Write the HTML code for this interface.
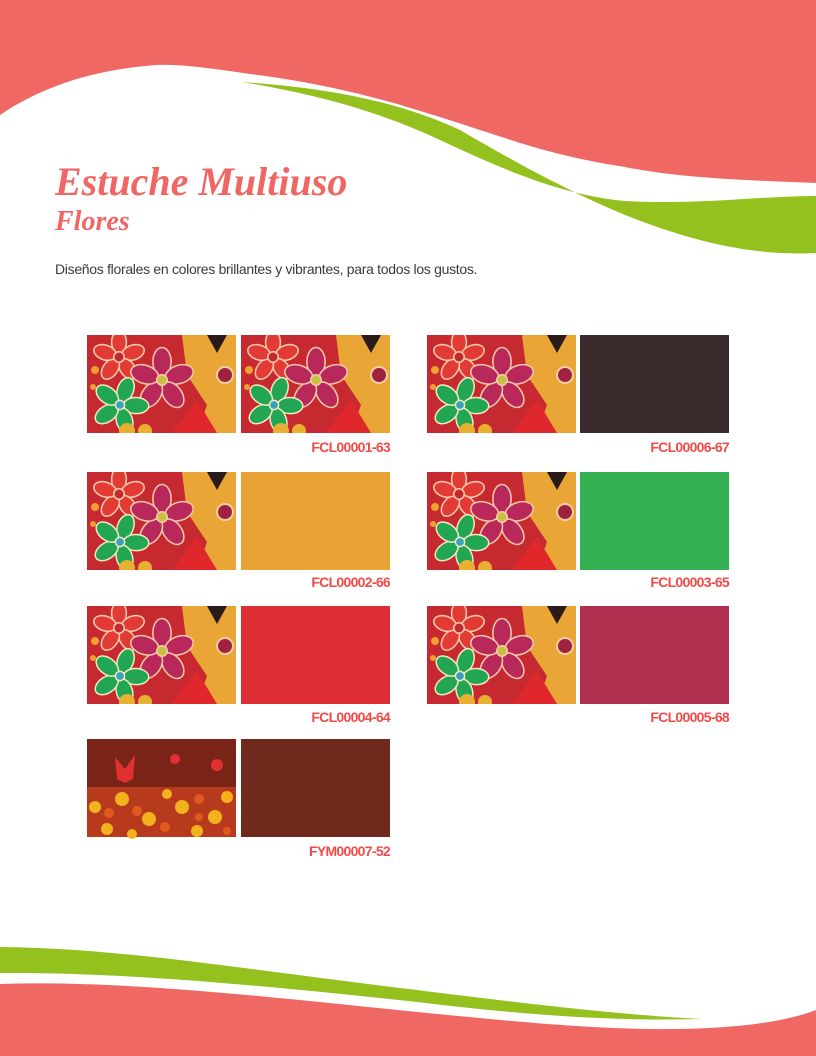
<!DOCTYPE html>
<html><head><meta charset="utf-8"><style>
body{margin:0;width:816px;height:1056px;position:relative;background:#fff;overflow:hidden;font-family:"Liberation Sans",sans-serif}
svg.bg{position:absolute;left:0;top:0}
.t{position:absolute;font-family:"Liberation Serif",serif;font-style:italic;font-weight:bold;color:#ef6663;white-space:nowrap}
.d{position:absolute;left:55px;top:261px;font-size:14px;color:#3a3a3a;letter-spacing:-0.3px}
.lab{position:absolute;font-size:14px;font-weight:bold;color:#ef4b48;letter-spacing:-0.7px;text-align:right;width:200px}
</style></head><body>
<svg class="bg" width="816" height="1056" viewBox="0 0 816 1056">
<path d="M0 0H816V183C740 180 680 178 625 167C580 160 550 152 520 143C480 130 450 120 417 110C360 92 300 80 250 74C210 68 180 64 156 65C90 70 40 88 0 115Z" fill="#ef6863"/>
<path d="M242 82C320 95 380 112 440 140C500 168 560 195 625 201C700 205 760 196 816 196V253C760 256 700 245 625 215C570 192 520 165 460 130C400 102 330 88 242 82Z" fill="#95c11f"/>
<path d="M0 947C120 948 250 970 417 990C560 1008 640 1016 703 1019C600 1022 500 1012 417 1002C260 985 120 972 0 973Z" fill="#95c11f"/>
<path d="M0 984C120 980 260 996 417 1012C520 1022 580 1028 650 1029C720 1030 780 1024 816 1010V1056H0Z" fill="#ef6863"/>
<defs>
<g id="pet"><ellipse cx="0" cy="-14" rx="7" ry="11"/><ellipse cx="0" cy="-14" rx="7" ry="11" transform="rotate(72)"/><ellipse cx="0" cy="-14" rx="7" ry="11" transform="rotate(144)"/><ellipse cx="0" cy="-14" rx="7" ry="11" transform="rotate(216)"/><ellipse cx="0" cy="-14" rx="7" ry="11" transform="rotate(288)"/></g>
<clipPath id="cp"><rect width="149" height="98"/></clipPath>
<g id="fl"><g clip-path="url(#cp)">
<rect width="149" height="98" fill="#c62a30"/>
<path d="M95 0H149V98H110L120 70L100 40Z" fill="#e9a637"/>
<path d="M120 0H140L130 18Z" fill="#2a1a1a"/>
<circle cx="138" cy="40" r="8" fill="#a02040" stroke="#f4d0a0" stroke-width="2"/>
<path d="M85 98L110 65L130 98Z" fill="#e0282c"/>
<g transform="translate(32,22) scale(1.05)" fill="#e23a34" stroke="#f5c8a8" stroke-width="1.5"><use href="#pet"/><circle r="5" fill="#c02a30"/></g>
<g transform="translate(75,45) scale(1.3)" fill="#b8285a" stroke="#f5c8a8" stroke-width="1.2"><use href="#pet"/><circle r="4" fill="#c8c040"/></g>
<g transform="translate(33,70) scale(1.15) rotate(20)" fill="#22a654" stroke="#f5e8c0" stroke-width="1.3"><use href="#pet"/><circle r="4" fill="#3aa0c0"/></g>
<circle cx="40" cy="96" r="8" fill="#e8b030"/><circle cx="58" cy="96" r="7" fill="#e8b030"/>
<circle cx="8" cy="35" r="4" fill="#f0a030"/><circle cx="6" cy="52" r="3" fill="#f0a030"/>
</g></g>
<g id="fy">
<rect width="149" height="98" fill="#7a2418"/>
<rect y="48" width="149" height="50" fill="#b83a1c"/>
<path d="M28 18L38 30L48 16L46 40L38 44L30 40Z" fill="#e03030"/>
<circle cx="88" cy="20" r="5" fill="#e03030"/><circle cx="130" cy="26" r="6" fill="#e03030"/>
<g fill="#f2b21e"><circle cx="8" cy="68" r="6"/><circle cx="35" cy="60" r="7"/><circle cx="62" cy="80" r="7"/><circle cx="95" cy="68" r="7"/><circle cx="128" cy="78" r="7"/><circle cx="140" cy="58" r="6"/><circle cx="20" cy="90" r="6"/><circle cx="80" cy="55" r="5"/><circle cx="110" cy="92" r="6"/><circle cx="45" cy="95" r="5"/></g>
<g fill="#e05a20"><circle cx="22" cy="74" r="5"/><circle cx="50" cy="72" r="5"/><circle cx="78" cy="88" r="5"/><circle cx="112" cy="60" r="5"/><circle cx="112" cy="78" r="4"/><circle cx="140" cy="92" r="4"/></g>
</g>
</defs>
<use href="#fl" x="87" y="335"/><use href="#fl" x="241" y="335"/>
<use href="#fl" x="427" y="335"/><rect x="580" y="335" width="149" height="98" fill="#3a2a2b"/>
<use href="#fl" x="87" y="472"/><rect x="241" y="472" width="149" height="98" fill="#e9a334"/>
<use href="#fl" x="427" y="472"/><rect x="580" y="472" width="149" height="98" fill="#33b152"/>
<use href="#fl" x="87" y="606"/><rect x="241" y="606" width="149" height="98" fill="#dd2e36"/>
<use href="#fl" x="427" y="606"/><rect x="580" y="606" width="149" height="98" fill="#b13050"/>
<use href="#fy" x="87" y="739"/><rect x="241" y="739" width="149" height="98" fill="#6f2a1e"/>
</svg>
<div class="t" style="left:55px;top:158px;font-size:40px">Estuche Multiuso</div>
<div class="t" style="left:55px;top:206px;font-size:28px">Flores</div>
<div class="d">Diseños florales en colores brillantes y vibrantes, para todos los gustos.</div>
<div class="lab" style="left:190px;top:439px">FCL00001-63</div>
<div class="lab" style="left:529px;top:439px">FCL00006-67</div>
<div class="lab" style="left:190px;top:574px">FCL00002-66</div>
<div class="lab" style="left:529px;top:574px">FCL00003-65</div>
<div class="lab" style="left:190px;top:709px">FCL00004-64</div>
<div class="lab" style="left:529px;top:709px">FCL00005-68</div>
<div class="lab" style="left:190px;top:843px">FYM00007-52</div>
</body></html>
